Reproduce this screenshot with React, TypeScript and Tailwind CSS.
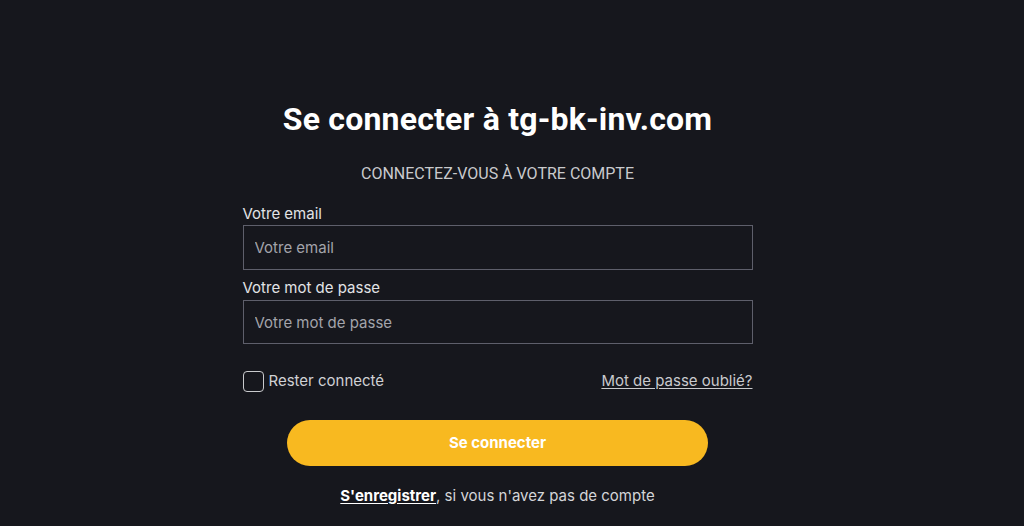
export default function App() {
  return (
    <div className="min-h-[526px] w-full bg-[#16171d] flex justify-center pr-[29px] font-['Inter',sans-serif]">
      <div className="w-[510px] flex flex-col items-center pt-[98px]">
        <h1 className="font-['Roboto',sans-serif] text-[32px] leading-[42px] font-bold text-white tracking-[0.2px]">
          Se connecter à tg-bk-inv.com
        </h1>
        <p className="mt-[24px] font-['Roboto',sans-serif] text-[16px] leading-[20px] text-[#c9cacd] uppercase">
          Connectez-vous à votre compte
        </p>
        <form className="w-full mt-[21px] flex flex-col">
          <label className="text-[15px] leading-[18px] text-[#e2e3e6]">Votre email</label>
          <input
            type="email"
            placeholder="Votre email"
            className="mt-[2px] h-[45px] w-full bg-transparent border border-[#5e5f6b] px-[11px] text-[15px] text-white placeholder:text-[#a3a4ab] outline-none"
          />
          <label className="mt-[9px] text-[15px] leading-[18px] text-[#e2e3e6]">Votre mot de passe</label>
          <input
            type="password"
            placeholder="Votre mot de passe"
            className="mt-[3px] h-[44px] w-full bg-transparent border border-[#5e5f6b] px-[11px] text-[15px] text-white placeholder:text-[#a3a4ab] outline-none"
          />
          <div className="mt-[26px] h-[22px] flex items-center justify-between">
            <label className="flex items-center gap-[5px] text-[15px] text-[#d0d1d4]">
              <span className="w-[21px] h-[21px] rounded-[4px] border border-[#c9cacd]" />
              Rester connecté
            </label>
            <a href="#" className="text-[15px] text-[#c9cacd] underline underline-offset-[2px]">
              Mot de passe oublié?
            </a>
          </div>
          <button
            type="button"
            className="mt-[28px] self-center w-[421px] h-[46px] rounded-full bg-[#f8b920] text-white text-[15px] font-bold"
          >
            Se connecter
          </button>
          <p className="mt-[20px] text-center text-[15px] leading-[20px] text-[#d4d5d8]">
            <a href="#" className="font-bold text-white underline underline-offset-[2px]">S'enregistrer</a>, si vous n'avez pas de compte
          </p>
        </form>
      </div>
    </div>
  );
}
